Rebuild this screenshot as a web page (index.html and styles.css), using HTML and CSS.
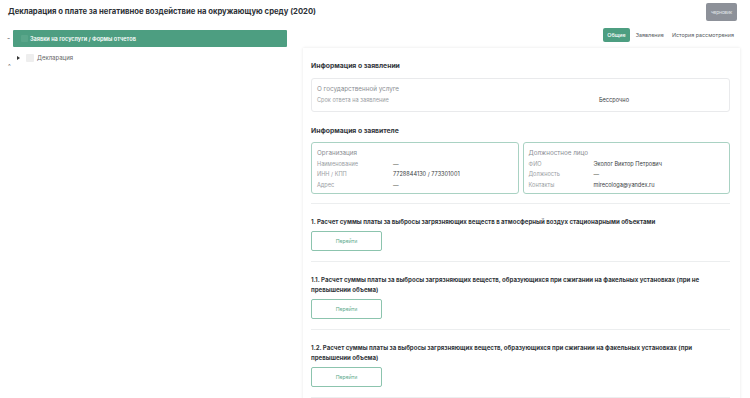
FILE: index.html
```html
<!DOCTYPE html>
<html lang="ru">
<head>
<meta charset="utf-8">
<link rel="stylesheet" href="styles.css">
</head>
<body>
<div class="page">
  <header class="top">
    <h1 class="title">Декларация о плате за негативное воздействие на окружающую среду (2020)</h1>
    <button class="draft">черновик</button>
  </header>
  <div class="main">
    <aside class="tree">
      <div class="root">
        <span class="minus">-</span>
        <div class="bar"><span class="cb cb-bar"></span>Заявки на госуслуги / Формы отчетов</div>
      </div>
      <div class="child">
        <span class="arrow"></span>
        <span class="cb"></span>
        <span class="child-label">Декларация</span>
      </div>
      <span class="caret">^</span>
    </aside>
    <section class="content">
      <nav class="tabs">
        <span class="tab active">Общие</span>
        <span class="tab">Заявление</span>
        <span class="tab">История рассмотрения</span>
      </nav>
      <div class="panel">
        <h2 class="sec-title">Информация о заявлении</h2>
        <div class="box">
          <div class="box-title">О государственной услуге</div>
          <div class="row wide"><span class="lbl">Срок ответа на заявление</span><span class="val">Бессрочно</span></div>
        </div>
        <h2 class="sec-title">Информация о заявителе</h2>
        <div class="pair">
          <div class="box green">
            <div class="box-title">Организация</div>
            <div class="row"><span class="lbl">Наименование</span><span class="val">—</span></div>
            <div class="row"><span class="lbl">ИНН / КПП</span><span class="val">7728844130 / 773301001</span></div>
            <div class="row"><span class="lbl">Адрес</span><span class="val">—</span></div>
          </div>
          <div class="box green">
            <div class="box-title">Должностное лицо</div>
            <div class="row r2"><span class="lbl">ФИО</span><span class="val">Эколог Виктор Петрович</span></div>
            <div class="row r2"><span class="lbl">Должность</span><span class="val">—</span></div>
            <div class="row r2"><span class="lbl">Контакты</span><span class="val">mirecologa@yandex.ru</span></div>
          </div>
        </div>
        <div class="item">
          <h3 class="item-title">1. Расчет суммы платы за выбросы загрязняющих веществ в атмосферный воздух стационарными объектами</h3>
          <button class="go">Перейти</button>
        </div>
        <div class="item">
          <h3 class="item-title">1.1. Расчет суммы платы за выбросы загрязняющих веществ, образующихся при сжигании на факельных установках (при не превышении объема)</h3>
          <button class="go">Перейти</button>
        </div>
        <div class="item">
          <h3 class="item-title">1.2. Расчет суммы платы за выбросы загрязняющих веществ, образующихся при сжигании на факельных установках (при превышении объема)</h3>
          <button class="go">Перейти</button>
        </div>
      </div>
    </section>
  </div>
</div>
</body>
</html>
```

FILE: styles.css
```css
* { box-sizing: border-box; }
html, body { margin: 0; padding: 0; background: #ffffff; }
body { font-family: Inter, "Noto Sans", sans-serif; color: #2f3338; overflow: hidden; }

.page { width: 750px; height: 398px; }

.top {
  display: flex;
  justify-content: space-between;
  align-items: flex-start;
  padding: 3px 13px 0 8px;
  height: 28px;
}
.title {
  margin: 4px 0 0 0;
  font-size: 7.7px;
  font-weight: 700;
  line-height: 10px;
  color: #2d3136;
  letter-spacing: 0;
}
.draft {
  flex: none;
  width: 31px;
  height: 18px;
  border: 0;
  border-radius: 2px;
  background: #8d9199;
  color: #dfe2e6;
  font-family: inherit;
  font-size: 5px;
  letter-spacing: -0.3px;
  padding: 0;
  white-space: nowrap;
  overflow: hidden;
}

.main {
  display: flex;
  align-items: flex-start;
}

.tree {
  width: 303px;
  flex: none;
  padding: 2px 16px 0 7px;
  display: flex;
  flex-direction: column;
}
.root { display: flex; align-items: center; }
.minus { width: 6px; font-size: 7px; color: #555; line-height: 17px; }
.bar {
  flex: 1;
  height: 17px;
  background: #4d9e81;
  border-radius: 1px;
  color: #ffffff;
  font-size: 5.6px;
  font-weight: 600;
  display: flex;
  align-items: center;
  padding-left: 8px;
}
.cb {
  width: 8px; height: 8px;
  background: #eeeeee;
  border-radius: 1px;
  flex: none;
}
.cb-bar { background: #5aa68a; margin-right: 2px; width: 7px; height: 7px; }
.child {
  display: flex;
  align-items: center;
  height: 11px;
  margin-top: 5px;
  padding-left: 10px;
}
.arrow {
  width: 0; height: 0;
  border-top: 2px solid transparent;
  border-bottom: 2px solid transparent;
  border-left: 3px solid #333;
  margin-right: 6px;
}
.child-label { font-size: 6px; color: #666; margin-left: 3px; }
.caret { font-size: 6px; color: #666; line-height: 6px; margin-top: 0; padding-left: 1px; }

.content {
  width: 437px;
  flex: none;
  display: flex;
  flex-direction: column;
}
.tabs {
  display: flex;
  justify-content: flex-end;
  align-items: center;
  gap: 4px;
  height: 14px;
  padding-right: 4px;
}
.tab { font-size: 5.4px; color: #555a60; padding: 0 2px; line-height: 14px; }
.tab.active {
  background: #4d9e81;
  color: #fff;
  border-radius: 2px;
  padding: 0 4px;
  font-weight: 500;
}

.panel {
  margin-top: 6px;
  padding: 12px 10px 0 8px;
  background: #fff;
  box-shadow: 0 0 3px rgba(0,0,0,0.10);
  height: 360px;
}
.sec-title {
  margin: 0;
  font-size: 6.8px;
  font-weight: 700;
  line-height: 12px;
  color: #33373c;
}
.box {
  border: 1px solid #e9eaec;
  border-radius: 3px;
  padding: 5px 5px 5px 5px;
  margin-top: 6px;
  margin-bottom: 13px;
}
.box-title { font-size: 6.3px; color: #8a8e93; line-height: 10px; margin-bottom: 1px; }
.row { display: flex; font-size: 5.6px; line-height: 10.5px; color: #333; }
.row .lbl { width: 76px; color: #9a9ea3; flex: none; }
.row.r2 .lbl { width: 65px; }
.row.wide .lbl { width: 282px; }
.row .val { color: #3a3e43; font-weight: 400; }

.pair {
  display: grid;
  grid-template-columns: 1fr 1fr;
  gap: 4px;
  margin-top: 5px;
  padding-bottom: 9px;
  border-bottom: 1px solid #eceeef;
}
.pair .box { margin: 0; border-color: #a9d2c3; height: 52px; }

.item {
  padding: 13px 0 10px 0;
  border-bottom: 1px solid #eceeef;
}
.item-title {
  margin: 0 0 4px 0;
  font-size: 6.1px;
  font-weight: 700;
  line-height: 10px;
  color: #33373c;
  padding-right: 20px;
}
.go {
  display: block;
  width: 71px;
  height: 20px;
  background: #fff;
  border: 1px solid #8cc4ae;
  border-radius: 2px;
  color: #5aa88a;
  font-family: inherit;
  font-size: 5.2px;
  padding: 0;
}
```
